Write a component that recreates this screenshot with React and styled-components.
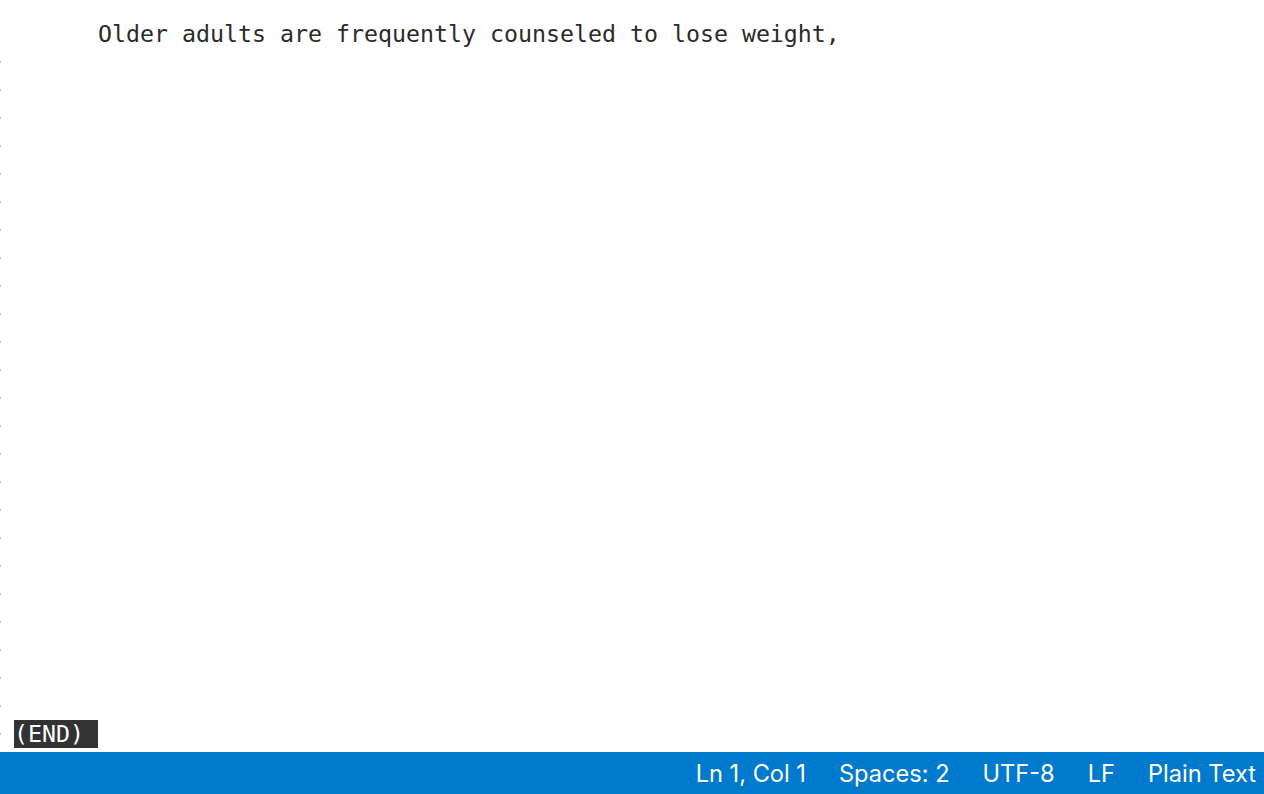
import React from 'react';
import styled, { createGlobalStyle } from 'styled-components';

const GlobalStyle = createGlobalStyle`
  html, body {
    margin: 0;
    padding: 0;
    background: #ffffff;
    height: 100%;
  }
  #root {
    height: 100%;
  }
`;

const Page = styled.div`
  height: 794px;
  display: flex;
  flex-direction: column;
  background: #ffffff;
  overflow: hidden;
`;

const Pager = styled.div`
  flex: 1;
  padding-top: 20px;
  display: flex;
  flex-direction: column;
  font-family: 'DejaVu Sans Mono', 'Liberation Mono', monospace;
  font-size: 23.25px;
  color: #2b2b2b;
`;

const Row = styled.div`
  height: 28px;
  line-height: 28px;
  display: flex;
  align-items: center;
`;

const Gutter = styled.div`
  width: 14px;
  height: 28px;
  flex: none;
  display: flex;
  align-items: center;
`;

// little grey mark less leaves on empty lines past the end of the file
const Mark = styled.span`
  width: 1px;
  height: 2px;
  background: #c8c8c8;
`;

const Content = styled.span`
  white-space: pre;
`;

const EndTag = styled.span`
  white-space: pre;
  background: #333333;
  color: #ffffff;
  height: 28px;
  line-height: 28px;
`;

const StatusBar = styled.footer`
  margin-top: 4px;
  height: 42px;
  flex: none;
  background: #007acc;
  display: flex;
  justify-content: flex-end;
  align-items: center;
  gap: 33px;
  padding-right: 8px;
  font-family: Inter, 'Noto Sans', sans-serif;
  font-size: 23.6px;
  color: #ffffff;
`;

const StatusItem = styled.span`
  white-space: nowrap;
`;

const lines = ['      Older adults are frequently counseled to lose weight,'];
const emptyRows = 24;
const statusItems = ['Ln 1, Col 1', 'Spaces: 2', 'UTF-8', 'LF', 'Plain Text'];

export default function App() {
  return (
    <Page>
      <GlobalStyle />
      <Pager>
        {lines.map((text, i) => (
          <Row key={`l${i}`}>
            <Gutter />
            <Content>{text}</Content>
          </Row>
        ))}
        {Array.from({ length: emptyRows }).map((_, i) => (
          <Row key={`e${i}`}>
            <Gutter>
              <Mark />
            </Gutter>
          </Row>
        ))}
        <Row>
          <Gutter>
            <Mark />
          </Gutter>
          <EndTag>(END) </EndTag>
        </Row>
      </Pager>
      <StatusBar>
        {statusItems.map((item) => (
          <StatusItem key={item}>{item}</StatusItem>
        ))}
      </StatusBar>
    </Page>
  );
}
